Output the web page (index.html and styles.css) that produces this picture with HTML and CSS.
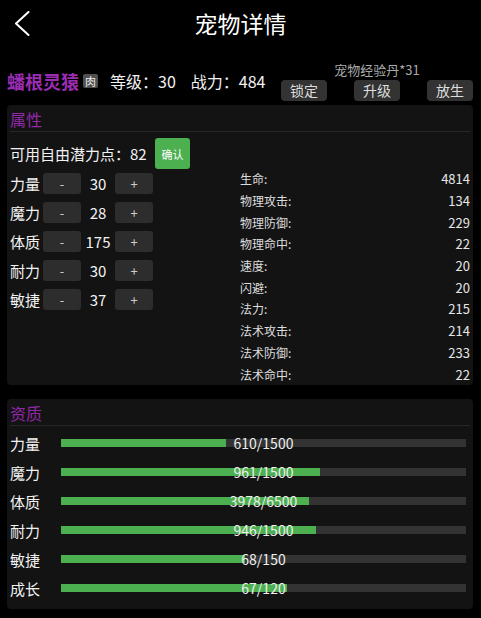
FILE: index.html
```html
<!DOCTYPE html>
<html lang="zh-CN">
<head>
<meta charset="utf-8">
<title>宠物详情</title>
<link rel="stylesheet" href="styles.css">
</head>
<body>
<div class="screen">
  <header class="topbar">
    <button class="back" aria-label="返回">
      <svg width="16" height="25" viewBox="0 0 16 25"><polyline points="14.5,1 2,12.5 14.5,24" fill="none" stroke="#fff" stroke-width="2" stroke-linecap="round" stroke-linejoin="round"/></svg>
    </button>
    <h1>宠物详情</h1>
    <span></span>
  </header>

  <section class="pet-info">
    <div class="pet-meta">
      <span class="pet-name">蟠根灵猿</span><span class="tag">肉</span>
      <span class="meta-item level">等级：30</span>
      <span class="meta-item power">战力：484</span>
    </div>
    <div class="pet-actions">
      <div class="exp-item">宠物经验丹*31</div>
      <div class="action-row">
        <button class="action">锁定</button>
        <button class="action">升级</button>
        <button class="action">放生</button>
      </div>
    </div>
  </section>

  <section class="panel attr-panel">
    <h2 class="panel-title">属性</h2>
    <div class="attr-body">
      <div class="alloc">
        <div class="free-row"><span class="free-text">可用自由潜力点：82</span><button class="confirm">确认</button></div>
        <div class="alloc-row"><span class="alloc-label">力量</span><button class="step">-</button><span class="alloc-value">30</span><button class="step">+</button></div>
        <div class="alloc-row"><span class="alloc-label">魔力</span><button class="step">-</button><span class="alloc-value">28</span><button class="step">+</button></div>
        <div class="alloc-row"><span class="alloc-label">体质</span><button class="step">-</button><span class="alloc-value">175</span><button class="step">+</button></div>
        <div class="alloc-row"><span class="alloc-label">耐力</span><button class="step">-</button><span class="alloc-value">30</span><button class="step">+</button></div>
        <div class="alloc-row"><span class="alloc-label">敏捷</span><button class="step">-</button><span class="alloc-value">37</span><button class="step">+</button></div>
      </div>
      <dl class="stats">
        <div class="stat"><dt>生命:</dt><dd>4814</dd></div>
        <div class="stat"><dt>物理攻击:</dt><dd>134</dd></div>
        <div class="stat"><dt>物理防御:</dt><dd>229</dd></div>
        <div class="stat"><dt>物理命中:</dt><dd>22</dd></div>
        <div class="stat"><dt>速度:</dt><dd>20</dd></div>
        <div class="stat"><dt>闪避:</dt><dd>20</dd></div>
        <div class="stat"><dt>法力:</dt><dd>215</dd></div>
        <div class="stat"><dt>法术攻击:</dt><dd>214</dd></div>
        <div class="stat"><dt>法术防御:</dt><dd>233</dd></div>
        <div class="stat"><dt>法术命中:</dt><dd>22</dd></div>
      </dl>
    </div>
  </section>

  <section class="panel apt-panel">
    <h2 class="panel-title">资质</h2>
    <div class="apt-list">
      <div class="apt-row"><span class="apt-label">力量</span><div class="bar"><div class="bar-fill" style="width:40.67%"></div><span class="bar-text">610/1500</span></div></div>
      <div class="apt-row"><span class="apt-label">魔力</span><div class="bar"><div class="bar-fill" style="width:64.07%"></div><span class="bar-text">961/1500</span></div></div>
      <div class="apt-row"><span class="apt-label">体质</span><div class="bar"><div class="bar-fill" style="width:61.2%"></div><span class="bar-text">3978/6500</span></div></div>
      <div class="apt-row"><span class="apt-label">耐力</span><div class="bar"><div class="bar-fill" style="width:63.07%"></div><span class="bar-text">946/1500</span></div></div>
      <div class="apt-row"><span class="apt-label">敏捷</span><div class="bar"><div class="bar-fill" style="width:45.33%"></div><span class="bar-text">68/150</span></div></div>
      <div class="apt-row"><span class="apt-label">成长</span><div class="bar"><div class="bar-fill" style="width:55.83%"></div><span class="bar-text">67/120</span></div></div>
    </div>
  </section>
</div>
</body>
</html>
```

FILE: styles.css
```css
* { box-sizing: border-box; }

body {
  margin: 0;
  background: #000;
  color: #f2f2f2;
  font-family: "Noto Sans CJK SC", "Noto Sans", sans-serif;
}

button {
  font-family: inherit;
  border: 0;
  padding: 0;
  cursor: pointer;
}

/* top navigation */
.topbar {
  display: grid;
  grid-template-columns: 1fr auto 1fr;
  align-items: center;
  height: 47px;
}

.back {
  justify-self: start;
  margin-left: 14px;
  background: none;
  display: flex;
}

.topbar h1 {
  margin: 0;
  font-size: 23px;
  font-weight: 400;
  line-height: 47px;
  color: #fff;
}

/* name / level / actions row */
.pet-info {
  display: flex;
  justify-content: space-between;
  margin: 15px 8px 4px 7px;
}

.pet-meta {
  display: flex;
  align-items: center;
  align-self: flex-start;
  margin-top: 8px;
  height: 22px;
  font-size: 16px;
  color: #f2f2f2;
}

.pet-name {
  font-size: 18px;
  font-weight: 700;
  color: #9c2cb4;
}

.tag {
  display: grid;
  place-items: center;
  width: 15px;
  height: 14px;
  margin-left: 4px;
  font-size: 11px;
  line-height: 1;
  background: #505050;
  color: #eee;
  border-radius: 2px;
}

.meta-item.level { margin-left: 12px; }
.meta-item.power { margin-left: 15px; }

.pet-actions {
  width: 192px;
  display: flex;
  flex-direction: column;
}

.exp-item {
  text-align: center;
  font-size: 13px;
  line-height: 16px;
  color: #aaa;
}

.action-row {
  display: flex;
  justify-content: space-between;
  margin-top: 2px;
}

.action {
  width: 46px;
  height: 21px;
  background: #333;
  color: #ddd;
  font-size: 14px;
  line-height: 21px;
  border-radius: 4px;
}

/* panels */
.panel {
  background: #131313;
  border-radius: 4px;
  margin: 0 8px 0 7px;
  padding: 3px 3px 0;
}

.panel-title {
  margin: 0;
  font-size: 16px;
  font-weight: 400;
  line-height: 23px;
  color: #9128a8;
  border-bottom: 1px solid #262626;
}

/* attributes */
.attr-body {
  display: grid;
  grid-template-columns: 230px 1fr;
}

.alloc {
  display: flex;
  flex-direction: column;
  gap: 8px;
  padding-top: 6px;
}

.free-row {
  display: flex;
  align-items: center;
  height: 31px;
  margin-bottom: -4px;
  font-size: 15px;
}

.free-text { width: 145px; white-space: nowrap; }

.confirm {
  width: 35px;
  height: 31px;
  background: #4caf50;
  color: #fff;
  font-size: 11px;
  border-radius: 3px;
}

.alloc-row {
  display: flex;
  align-items: center;
  height: 21px;
  font-size: 15px;
}

.alloc-label { width: 33px; }

.step {
  width: 38px;
  height: 21px;
  background: #2d2d2d;
  color: #ccc;
  font-size: 13px;
  border-radius: 3px;
}

.alloc-value {
  width: 34px;
  text-align: center;
}

.stats {
  margin: 0;
  padding-top: 36px;
}

.stat {
  display: flex;
  justify-content: space-between;
  align-items: center;
  height: 21.7px;
}

.stat dt {
  font-size: 12px;
  color: #ddd;
}

.stat dd {
  margin: 0;
  font-size: 13px;
  color: #e6e6e6;
}

/* aptitude bars */
.apt-panel { margin-top: 14px; }

.apt-list {
  padding: 3px 0 6px;
}

.apt-row {
  display: grid;
  grid-template-columns: 51px 1fr;
  align-items: center;
  height: 29px;
  font-size: 15px;
}

.bar {
  position: relative;
  height: 8px;
  margin-right: 4px;
  background: #333;
}

.bar-fill {
  height: 100%;
  background: #4caf50;
}

.bar-text {
  position: absolute;
  left: 0;
  right: 0;
  top: 50%;
  transform: translateY(-50%);
  text-align: center;
  font-size: 14px;
  line-height: 16px;
  color: #eee;
}
```
